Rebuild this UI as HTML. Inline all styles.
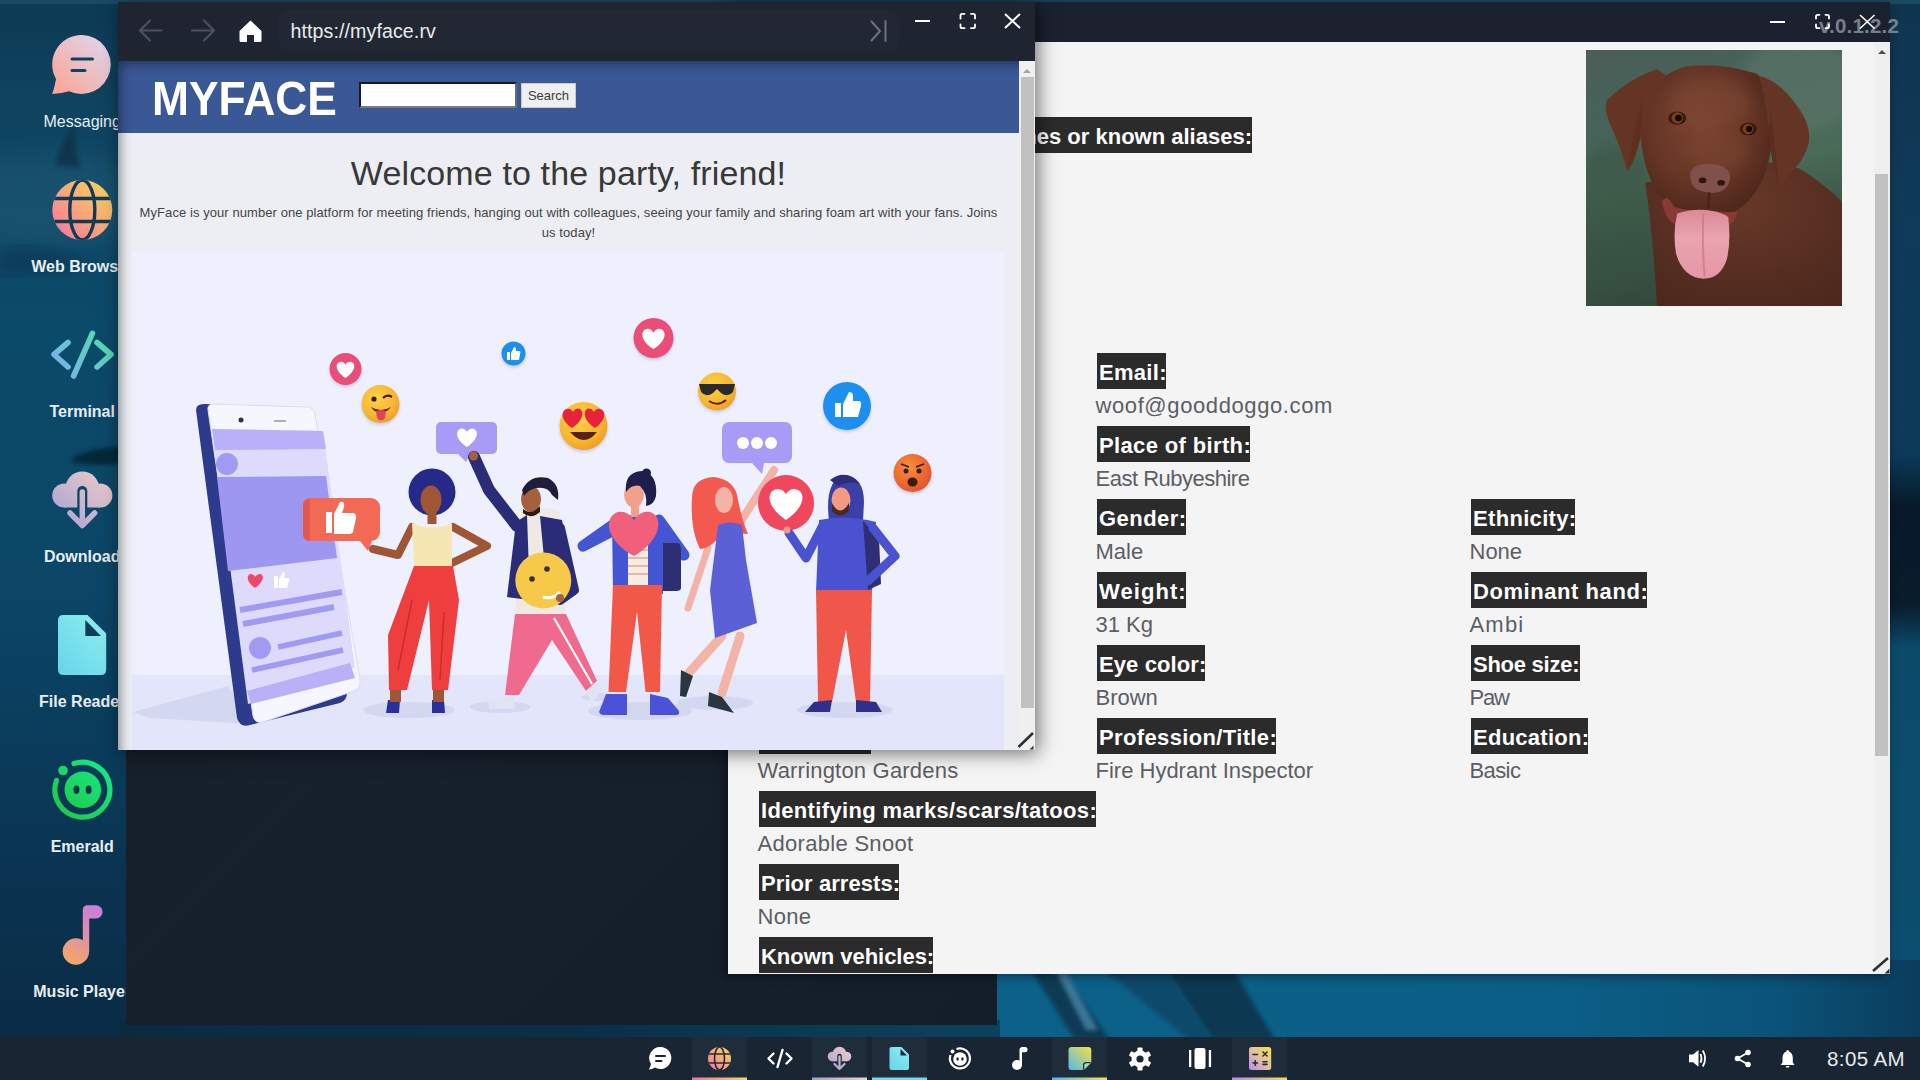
<!DOCTYPE html>
<html><head><meta charset="utf-8">
<style>
*{box-sizing:border-box;margin:0;padding:0}
html,body{width:1920px;height:1080px;overflow:hidden}
body{position:relative;font-family:"Liberation Sans",sans-serif;background:#0b4566}
.abs{position:absolute}
#wall{left:0;top:0;
 background:
  radial-gradient(ellipse 500px 300px at 1300px 1010px, rgba(20,120,170,.55), rgba(20,120,170,0) 70%),
  linear-gradient(180deg,#0d4a69 0%,#0b4262 45%,#0a3350 80%,#0a2c44 100%);}
/* desktop icons */
.dicon{position:absolute;left:0;width:165px;text-align:center}
.dlabel{position:absolute;left:0;width:165px;text-align:center;color:#e9eef1;font-size:16px;font-weight:700;white-space:nowrap}
/* dark back window */
#backwin{left:126px;top:40px;width:871px;height:985px;background:linear-gradient(135deg,#131c27,#17212d 50%,#141e29)}
/* profile window */
#prof{left:728px;top:2px;width:1162px;height:972px;background:#f4f4f4;box-shadow:-3px 2px 10px rgba(0,0,0,.45)}
#proftb{left:0;top:0;width:1162px;height:40px;background:#19222e}
.lbl{position:absolute;height:36px;background:#2b2b2b;color:#fff;font-weight:700;font-size:22px;line-height:36px;padding:2px 0 0 2px;white-space:nowrap;overflow:hidden}
.val{position:absolute;color:#5b5e64;font-size:22px;white-space:nowrap;line-height:33px;margin-left:-1.5px}
/* browser */
#brow{left:118px;top:2px;width:917px;height:748px;background:#eceef3;box-shadow:3px 3px 18px rgba(0,0,0,.55)}
#browtb{left:0;top:0;width:917px;height:59px;background:#1e2530}
#taskbar{left:0;top:1037px;width:1920px;height:43px;background:#1a2533}
.tslot{position:absolute;top:0;width:55px;height:43px}
.tslot.act{background:#1f2d3b}
.tund{position:absolute;left:0;bottom:0;width:55px;height:3px}
</style></head><body>
<svg id="wall" class="abs" width="1920" height="1080" viewBox="0 0 1920 1080">
 <defs>
  <linearGradient id="wl" x1="0" y1="0" x2="0" y2="1"><stop offset="0" stop-color="#0d3954"/><stop offset=".1" stop-color="#0f4460"/><stop offset=".3" stop-color="#0c4a6a"/><stop offset=".55" stop-color="#0b4666"/><stop offset=".8" stop-color="#0a3452"/><stop offset="1" stop-color="#0b2a42"/></linearGradient>
  <linearGradient id="wr" x1="0" y1="0" x2="0" y2="1"><stop offset="0" stop-color="#0e3450"/><stop offset=".2" stop-color="#0f3b58"/><stop offset=".42" stop-color="#0c3a58"/><stop offset=".47" stop-color="#07192a"/><stop offset=".56" stop-color="#081c2c"/><stop offset=".6" stop-color="#0c4a6a"/><stop offset="1" stop-color="#0b4f70"/></linearGradient>
  <linearGradient id="wbot" x1="0" x2="1"><stop offset="0" stop-color="#0c6189"/><stop offset=".6" stop-color="#0b5f87"/><stop offset=".85" stop-color="#0b5278"/><stop offset="1" stop-color="#0a3d5c"/></linearGradient>
  <filter id="wb12" x="-50%" y="-50%" width="200%" height="200%"><feGaussianBlur stdDeviation="14"/></filter>
  <linearGradient id="wstrip" x1="0" x2="1"><stop offset="0" stop-color="#0b2a40"/><stop offset=".5" stop-color="#0a2f47"/><stop offset="1" stop-color="#0b4260"/></linearGradient>
  <filter id="wb6"><feGaussianBlur stdDeviation="6"/></filter>
  <filter id="wb2"><feGaussianBlur stdDeviation="2"/></filter>
 </defs>
 <rect width="1920" height="1080" fill="#0b4566"/>
 <rect x="0" y="0" width="130" height="1080" fill="url(#wl)"/>
 <ellipse cx="50" cy="200" rx="120" ry="45" fill="#2a6580" opacity=".35" filter="url(#wb12)"/>
 <path d="M55 165 Q62 140 75 125 Q74 150 80 168 Z" fill="#0a3048" opacity=".8" filter="url(#wb2)"/>
 <path d="M0 250 Q40 240 90 262 Q60 272 0 275 Z" fill="#0a3552" opacity=".6" filter="url(#wb6)"/>
 <path d="M72 458 Q95 446 125 447 L125 462 Q100 468 72 462 Z" fill="#061a28" opacity=".7" filter="url(#wb2)"/>
 <rect x="1880" y="0" width="40" height="1080" fill="url(#wr)"/>
 <rect x="990" y="960" width="930" height="80" fill="url(#wbot)"/>
 <path d="M1158 960 L1228 960 L1275 1040 L1212 1040 Z" fill="#083048" opacity=".85" filter="url(#wb2)"/>
 <path d="M1092 960 L1160 960 L1214 1040 L1190 1040 Z" fill="#0b4a6a" filter="url(#wb2)"/>
 <path d="M1025 960 L1054 960 L1110 1040 L1075 1040 Z" fill="#0a3a55" filter="url(#wb2)"/>
 <path d="M1056 972 L1066 972 L1098 1030 L1086 1030 Z" fill="#5a9ec0" opacity=".6" filter="url(#wb2)"/>
 <rect x="0" y="0" width="1920" height="4" fill="#1a4a62"/>
 <rect x="120" y="1020" width="880" height="17" fill="url(#wstrip)"/>
</svg>

<svg class="abs" style="left:0;top:0" width="130" height="1037" viewBox="0 0 130 1037">
 <defs>
  <linearGradient id="gMsg" x1="0" y1="1" x2="1" y2="0"><stop offset="0" stop-color="#fca38f"/><stop offset="1" stop-color="#ddd9f5"/></linearGradient>
  <linearGradient id="gWeb" x1="0" y1="1" x2="1" y2="0"><stop offset="0" stop-color="#f76fa5"/><stop offset=".5" stop-color="#f9a77b"/><stop offset="1" stop-color="#f7d957"/></linearGradient>
  <linearGradient id="gTerm" gradientUnits="userSpaceOnUse" x1="52" y1="380" x2="112" y2="330"><stop offset="0" stop-color="#80a8f4"/><stop offset="1" stop-color="#4ee3a5"/></linearGradient>
  <linearGradient id="gDl" gradientUnits="userSpaceOnUse" x1="52" y1="528" x2="112" y2="470"><stop offset="0" stop-color="#a59ed6"/><stop offset="1" stop-color="#f0cfc6"/></linearGradient>
  <linearGradient id="gFile" x1="0" y1="1" x2="1" y2="0"><stop offset="0" stop-color="#66d4ea"/><stop offset="1" stop-color="#8ff0ee"/></linearGradient>
  <linearGradient id="gEm" gradientUnits="userSpaceOnUse" x1="52" y1="820" x2="112" y2="760"><stop offset="0" stop-color="#22c33e"/><stop offset="1" stop-color="#13ec8a"/></linearGradient>
  <linearGradient id="gMus" gradientUnits="userSpaceOnUse" x1="62" y1="965" x2="103" y2="905"><stop offset="0" stop-color="#f8ab5c"/><stop offset="1" stop-color="#c77ae6"/></linearGradient>
 </defs>
 <!-- messaging -->
 <path fill="url(#gMsg)" d="M82.5 35 A29.5 29.5 0 1 1 69 91.3 Q60 94 52.2 94 Q55 86 56 79 A29.5 29.5 0 0 1 82.5 35 Z"/>
 <g stroke="#0f4260" stroke-width="3" stroke-linecap="round"><path d="M72 59 H92.5 M72 70.5 H85"/></g>
 <!-- web -->
 <circle cx="82.3" cy="210" r="30" fill="url(#gWeb)"/>
 <clipPath id="cWeb"><circle cx="82.3" cy="210" r="30"/></clipPath>
 <g fill="none" stroke="#123a55" stroke-width="3.4" clip-path="url(#cWeb)">
  <ellipse cx="82.3" cy="210" rx="12.5" ry="30"/>
  <path d="M50 198.5 H115 M50 221.5 H115"/>
 </g>
 <!-- terminal -->
 <g fill="none" stroke="url(#gTerm)" stroke-width="5.6" stroke-linecap="round" stroke-linejoin="round">
  <path d="M68 342.5 L54 354.5 L68 367"/>
  <path d="M92.4 333.3 L73.6 376"/>
  <path d="M97 342.5 L111 354.5 L97 367"/>
 </g>
 <!-- download -->
 <g fill="url(#gDl)">
  <circle cx="82.3" cy="488.5" r="17"/><circle cx="64.2" cy="495.5" r="12"/><circle cx="100.4" cy="495.5" r="12"/><rect x="64.2" y="488.5" width="36.2" height="19"/>
 </g>
 <path d="M82.3 491 V527" stroke="#0f4362" stroke-width="10" stroke-linecap="round"/>
 <g fill="none" stroke="url(#gDl)" stroke-width="5.5" stroke-linecap="round" stroke-linejoin="round">
  <path d="M82.3 492 V524.5 M70 513 L82.3 525.5 L94.6 513"/>
 </g>
 <!-- file -->
 <path fill="url(#gFile)" d="M63 615 H87.5 L106.2 633.5 V669.5 Q106.2 675 100.7 675 H63.5 Q58 675 58 669.5 V620.5 Q58 615 63 615 Z"/>
 <path fill="#0f3d5a" d="M85.3 620 V636 H101 Z"/>
 <!-- emerald -->
 <path fill="none" stroke="url(#gEm)" stroke-width="5.2" stroke-linecap="round" d="M74 763.5 A27.5 27.5 0 1 1 56.5 780.5"/>
 <circle cx="63" cy="770.5" r="4.8" fill="url(#gEm)"/>
 <circle cx="82.8" cy="789.8" r="18.3" fill="url(#gEm)"/>
 <ellipse cx="76.4" cy="789.8" rx="3" ry="4.2" fill="#0f3550"/>
 <ellipse cx="88.6" cy="789.8" rx="3" ry="4.2" fill="#0f3550"/>
 <!-- music -->
 <g fill="url(#gMus)">
  <circle cx="75.9" cy="951.5" r="13.2"/>
  <path d="M82.8 951.5 V910 Q82.8 905.2 87.6 905.2 H96 A6.6 6.6 0 0 1 96 918.4 H89.2 V951.5 Z"/>
 </g>
</svg>
<div class="dlabel" style="left:-0.3px;top:121.5px;font-weight:400;width:165px;line-height:0">Messaging</div>
<div class="dlabel" style="left:-0.3px;top:266.5px;line-height:0">Web Browser</div>
<div class="dlabel" style="left:-0.3px;top:411.5px;line-height:0">Terminal</div>
<div class="dlabel" style="left:-0.3px;top:556.5px;line-height:0">Download</div>
<div class="dlabel" style="left:-0.3px;top:701.5px;line-height:0">File Reader</div>
<div class="dlabel" style="left:-0.3px;top:846.5px;line-height:0">Emerald</div>
<div class="dlabel" style="left:-0.3px;top:991.5px;line-height:0">Music Player</div>
<div id="backwin" class="abs"></div>

<!-- PROFILE WINDOW -->
<div id="prof" class="abs">
 <div id="proftb" class="abs">
  <div class="abs" style="left:1091px;top:14px;font-size:20.5px;font-weight:700;color:#76808a;white-space:nowrap;line-height:20px;letter-spacing:0.2px">v.0.1.2.2</div>
  <svg class="abs" style="left:0;top:0" width="1162" height="40" viewBox="728 2 1162 40">
   <g fill="none" stroke="#fff" stroke-width="2">
    <path d="M1770 22 H1785"/>
    <path stroke-width="1.8" stroke-linecap="round" d="M1816 18.5 V16.5 Q1816 14.8 1817.7 14.8 H1819.5 M1825.5 14.8 H1827.3 Q1829 14.8 1829 16.5 V18.5 M1829 24.5 V26.5 Q1829 28.2 1827.3 28.2 H1825.5 M1819.5 28.2 H1817.7 Q1816 28.2 1816 26.5 V24.5"/>
   </g>
   <path d="M1860 15 L1874.5 28.5 M1874.5 15 L1860 28.5" stroke="#fff" stroke-width="1.6"/>
  </svg>
 </div>
 <div class="abs" style="left:1146px;top:40px;width:16px;height:932px;background:#efefef">
  <div class="abs" style="left:1px;top:132px;width:13px;height:582px;background:#c1c1c1"></div>
  <svg class="abs" style="left:0;top:5px" width="16" height="8"><path d="M4 7 L8 3 L12 7Z" fill="#505050"/></svg>
 </div>
 <svg class="abs" style="left:1142px;top:952px" width="20" height="20"><path d="M3 17 L18 4" stroke="#2a3038" stroke-width="2.6"/><path d="M14.5 19.5 L19.5 14.5 V19.5 Z" fill="#2a3038"/></svg>
 <div id="dog" class="abs" style="left:858px;top:48px;width:256px;height:256px;overflow:hidden;background:#55705f">
  <svg width="256" height="256" viewBox="0 0 1080 1080">
   <defs>
    <linearGradient id="dbg" x1="0" y1="0" x2="0.2" y2="1"><stop offset="0" stop-color="#4a5f58"/><stop offset=".3" stop-color="#45635a"/><stop offset=".55" stop-color="#4a6b56"/><stop offset=".8" stop-color="#3b5646"/><stop offset="1" stop-color="#34493c"/></linearGradient>
    <radialGradient id="dhead" cx=".45" cy=".4" r=".6"><stop offset="0" stop-color="#7a4430"/><stop offset=".6" stop-color="#673626"/><stop offset="1" stop-color="#4f281c"/></radialGradient>
    <radialGradient id="dbody" cx=".5" cy=".3" r=".8"><stop offset="0" stop-color="#673828"/><stop offset="1" stop-color="#4c281d"/></radialGradient>
    <linearGradient id="dtong" x1="0" y1="0" x2="0" y2="1"><stop offset="0" stop-color="#d98a96"/><stop offset=".4" stop-color="#eaa3b0"/><stop offset="1" stop-color="#e597a6"/></linearGradient>
   </defs>
   <filter id="fb30"><feGaussianBlur stdDeviation="30"/></filter>
   <filter id="fb4"><feGaussianBlur stdDeviation="4"/></filter>
   <rect width="1080" height="1080" fill="url(#dbg)"/>
   <ellipse cx="900" cy="150" rx="260" ry="200" fill="#637a6c" opacity=".5" filter="url(#fb30)"/>
   <ellipse cx="120" cy="700" rx="200" ry="300" fill="#34503f" opacity=".5" filter="url(#fb30)"/>
   <!-- body -->
   <path fill="url(#dbody)" d="M250 560 Q280 760 300 1080 H1080 V640 Q1000 560 900 500 L760 470 Z"/>
   <!-- head -->
   <path fill="url(#dhead)" d="M230 330 Q240 120 420 70 Q560 50 720 100 Q800 160 790 330 Q780 520 700 620 Q620 720 500 700 Q360 690 300 600 Q230 480 230 330 Z"/>
   <!-- ears -->
   <path fill="#643524" d="M300 80 Q180 120 90 210 Q70 250 110 330 Q150 420 175 510 Q210 470 240 330 Q270 200 340 110 Z"/>
   <path fill="#5c2e1b" d="M240 200 Q200 330 175 505 Q215 440 235 330 Z" opacity=".7"/>
   <path fill="#643524" d="M730 110 Q820 130 900 250 Q950 320 940 390 Q920 470 860 520 Q830 560 815 600 Q790 520 780 420 Q770 260 730 110 Z"/>
   <path fill="#55291a" d="M780 260 Q800 420 815 600 Q790 480 770 380 Z" opacity=".6"/>
   <!-- forehead highlight -->
   <ellipse cx="520" cy="230" rx="170" ry="110" fill="#7e4834" opacity=".55" filter="url(#fb30)"/>
   <ellipse cx="560" cy="430" rx="120" ry="90" fill="#7a4532" opacity=".5" filter="url(#fb30)"/>
   <!-- eyes -->
   <ellipse cx="385" cy="287" rx="38" ry="28" fill="#3a1a10"/>
   <circle cx="385" cy="287" r="24" fill="#7a4018"/>
   <circle cx="390" cy="287" r="14" fill="#120804"/>
   <ellipse cx="685" cy="333" rx="36" ry="27" fill="#3a1a10"/>
   <circle cx="683" cy="333" r="22" fill="#7a4018"/>
   <circle cx="688" cy="333" r="13" fill="#120804"/>
   <!-- nose -->
   <path fill="#80504a" d="M440 520 Q450 480 525 480 Q600 485 608 530 Q610 580 560 600 Q520 610 470 590 Q435 565 440 520 Z"/>
   <ellipse cx="492" cy="550" rx="16" ry="12" fill="#2f150f"/>
   <ellipse cx="570" cy="560" rx="16" ry="12" fill="#2f150f"/>
   <path d="M520 600 L515 670" stroke="#4a2417" stroke-width="10"/>
   <!-- mouth -->
   <path fill="#8a3a35" d="M320 640 Q340 600 370 660 Q420 680 510 675 Q600 690 640 680 Q630 730 590 750 L380 740 Q330 710 320 640 Z"/>
   <!-- tongue -->
   <path fill="url(#dtong)" d="M385 690 Q440 670 505 675 Q580 685 600 705 Q612 800 595 880 Q570 965 495 965 Q410 960 380 860 Q365 770 385 690 Z"/>
   <path d="M495 690 Q490 820 500 955" stroke="#c77585" stroke-width="8" fill="none" opacity=".7"/>
  </svg>
 </div>
<div class="lbl" style="left:31px;top:115px;width:493px;text-align:right">Other names or known aliases:</div>
<div class="lbl" style="left:369px;top:351px;width:69px;letter-spacing:0.29px">Email:</div>
<div class="lbl" style="left:369px;top:424px;width:153px;letter-spacing:0.36px">Place of birth:</div>
<div class="lbl" style="left:369px;top:497px;width:89px;letter-spacing:0.46px">Gender:</div>
<div class="lbl" style="left:743px;top:497px;width:104px;letter-spacing:0.32px">Ethnicity:</div>
<div class="lbl" style="left:369px;top:570px;width:89px;letter-spacing:1.06px">Weight:</div>
<div class="lbl" style="left:743px;top:570px;width:176px;letter-spacing:0.56px">Dominant hand:</div>
<div class="lbl" style="left:369px;top:643px;width:108px;letter-spacing:0.10px">Eye color:</div>
<div class="lbl" style="left:743px;top:643px;width:109px;letter-spacing:-0.26px">Shoe size:</div>
<div class="lbl" style="left:31px;top:716px;width:112px">Address:</div>
<div class="lbl" style="left:369px;top:716px;width:179px;letter-spacing:0.36px">Profession/Title:</div>
<div class="lbl" style="left:743px;top:716px;width:117px;letter-spacing:0.27px">Education:</div>
<div class="lbl" style="left:31px;top:789px;width:337px;letter-spacing:0.35px">Identifying marks/scars/tatoos:</div>
<div class="lbl" style="left:31px;top:862px;width:140px;letter-spacing:0.07px">Prior arrests:</div>
<div class="lbl" style="left:31px;top:935px;width:174px;letter-spacing:-0.03px">Known vehicles:</div>
<div class="val" style="left:369px;top:387px;letter-spacing:0.6px">woof@gooddoggo.com</div>
<div class="val" style="left:369px;top:460px;letter-spacing:-0.5px">East Rubyeshire</div>
<div class="val" style="left:369px;top:533px">Male</div>
<div class="val" style="left:743px;top:533px">None</div>
<div class="val" style="left:369px;top:606px">31 Kg</div>
<div class="val" style="left:743px;top:606px;letter-spacing:1.2px">Ambi</div>
<div class="val" style="left:369px;top:679px">Brown</div>
<div class="val" style="left:743px;top:679px;letter-spacing:-1.2px">Paw</div>
<div class="val" style="left:31px;top:752px;letter-spacing:0.2px">Warrington Gardens</div>
<div class="val" style="left:369px;top:752px">Fire Hydrant Inspector</div>
<div class="val" style="left:743px;top:752px;letter-spacing:-0.6px">Basic</div>
<div class="val" style="left:31px;top:825px;letter-spacing:0.3px">Adorable Snoot</div>
<div class="val" style="left:31px;top:898px;letter-spacing:0.3px">None</div>
</div>

<!-- BROWSER WINDOW -->
<div id="brow" class="abs">
 <div id="browtb" class="abs">
  <div class="abs" style="left:160px;top:8px;width:622px;height:41px;border-radius:12px;background:#212833"></div>
  <svg class="abs" style="left:0;top:0" width="917" height="59" viewBox="0 0 917 59">
   <g fill="none" stroke="#4b525c" stroke-width="2.2" stroke-linecap="round" stroke-linejoin="round">
    <path d="M22.5 28.5 H43.5 M32 18.5 L22 28.5 L32 38.5"/>
    <path d="M74 28.5 H95.5 M86 18.5 L96 28.5 L86 38.5"/>
   </g>
   <path fill="#fff" d="M132.5 18.5 L121.5 29 V38.5 Q121.5 40 123 40 H129 V33 H136 V40 H142 Q143.5 40 143.5 38.5 V29 Z"/>
   <g fill="none" stroke="#6d727a" stroke-width="2" stroke-linecap="round" stroke-linejoin="round">
    <path d="M753.5 19.5 L762 29 L753.5 38.5 M767.5 19 V39"/>
   </g>
   <g fill="none" stroke="#fff" stroke-width="2" stroke-linecap="butt">
    <path d="M797 19 H812"/>
    <path stroke-width="1.8" stroke-linecap="round" d="M842.5 16.5 V13.5 Q842.5 11.8 844.2 11.8 H846.5 M853 11.8 H855.3 Q857 11.8 857 13.5 V16.5 M857 22.5 V24.5 Q857 26.2 855.3 26.2 H853 M846.5 26.2 H844.2 Q842.5 26.2 842.5 24.5 V22.5"/>
    <path d="M887 12 L902 26 M902 12 L887 26"/>
   </g>
  </svg>
  <div class="abs" style="left:172.5px;top:17.8px;font-size:19.6px;color:#e9ebed;letter-spacing:0.1px;white-space:nowrap">https://myface.rv</div>
 </div>
 <div id="page" class="abs" style="left:0;top:59px;width:901px;height:689px;overflow:hidden;background:#eceef3">
  <div class="abs" style="left:0;top:0;width:901px;height:72px;background:#3a5796"></div>
  <div class="abs" style="left:33.5px;top:36.6px;font-size:49px;font-weight:700;color:#fff;line-height:0;letter-spacing:0;white-space:nowrap;transform:scaleX(0.905);transform-origin:0 0">MYFACE</div>
  <div class="abs" style="left:241px;top:21px;width:158px;height:26px;background:#fff;border:2px solid #1a1a1a;border-right-color:#6a6a6a;border-bottom-color:#7a7a7a"></div>
  <div class="abs" style="left:403px;top:21.5px;width:55px;height:25px;background:#efefef;border:1px solid #c9c9c9;font-size:13px;color:#3a3a3a;text-align:center;line-height:23px">Search</div>
  <div class="abs" style="left:0;top:112px;width:901px;text-align:center;font-size:34px;color:#383838;white-space:nowrap;line-height:0;letter-spacing:0.13px">Welcome to the party, friend!</div>
  <div class="abs" style="left:0;top:142px;width:901px;text-align:center;font-size:13px;color:#444;line-height:20px;padding:0 10px;letter-spacing:0.075px">MyFace is your number one platform for meeting friends, hanging out with colleagues, seeing your family and sharing foam art with your fans. Joins<br>us today!</div>
  <div id="illus" class="abs" style="left:14px;top:190px;width:872px;height:510px;background:#eef0fd">
  <svg width="872" height="510" viewBox="132 251 872 510">
   <defs>
    <filter id="ishadow" x="-20%" y="-20%" width="140%" height="150%"><feDropShadow dx="0" dy="2" stdDeviation="1.5" flood-color="#8088b0" flood-opacity=".35"/></filter>
    <radialGradient id="emo" cx=".4" cy=".35" r=".7"><stop offset="0" stop-color="#ffd24a"/><stop offset=".7" stop-color="#f6b52f"/><stop offset="1" stop-color="#ef9a25"/></radialGradient>
    <radialGradient id="emoA" cx=".4" cy=".35" r=".7"><stop offset="0" stop-color="#f8903a"/><stop offset="1" stop-color="#e5502a"/></radialGradient>
   </defs>
   <rect x="132" y="675" width="872" height="90" fill="#e3e6fa"/>
   <!-- ground shadows -->
   <path d="M133 712 L228 686 L252 724 L150 718 Z" fill="#d3d7ef"/>
   <ellipse cx="409" cy="710" rx="46" ry="8" fill="#d3d7ef"/>
   <ellipse cx="500" cy="707" rx="30" ry="6" fill="#d3d7ef"/>
   <ellipse cx="596" cy="697" rx="14" ry="4" fill="#d3d7ef"/>
   <ellipse cx="640" cy="711" rx="52" ry="9" fill="#d3d7ef"/>
   <ellipse cx="715" cy="703" rx="38" ry="7" fill="#d3d7ef"/>
   <ellipse cx="845" cy="710" rx="48" ry="8" fill="#d3d7ef"/>
   <!-- phone -->
   <path d="M196 410 Q196 404 204 404 L300 407 Q308 408 309 414 L347 690 Q348 700 340 703 L250 725 Q240 728 237 718 Z" fill="#2d3b8c"/>
   <path d="M208 410 Q207 404 214 404 L308 407 Q314 408 315 414 L360 680 Q361 688 354 691 L263 722 Q255 724 253 716 Z" fill="#f5f6ff" stroke="#d9dcf5" stroke-width="1"/>
   <path d="M212 429 L323 431 L355 668 L248 704 Z" fill="#dedafc"/>
   <path d="M212 429 L323 431 L326 449 L215 450 Z" fill="#b8b0f8"/>
   <circle cx="227" cy="464" r="11" fill="#a09af2"/>
   <path d="M217 477 L326 476 L337 558 L228 571 Z" fill="#9d97f2"/>
   <path d="M255 590 C245 583 247 576 251 576 C254 576 255 579 255 579 C255 579 257 576 260 576 C264 576 265 583 255 590 Z" fill="#ef4866" transform="translate(0 -2) scale(1)"/>
   <path d="M274 576 H278 V588 H274 Z M279 579 L283 572 Q285 572 285 575 L284 578 H289 Q290 579 289 581 L287 588 H279 Z" fill="#fff"/>
   <path d="M240 610 L342 592" stroke="#a09af2" stroke-width="6"/>
   <path d="M243 624 L334 607" stroke="#a09af2" stroke-width="6"/>
   <circle cx="260" cy="648" r="11" fill="#a09af2"/>
   <path d="M278 647 L342 633" stroke="#a09af2" stroke-width="5.5"/>
   <path d="M252 670 L343 650" stroke="#a09af2" stroke-width="5.5"/>
   <path d="M247 691 L350 663 L355 678 L251 704 Z" fill="#b8b0f8"/>
   <circle cx="241" cy="420" r="2.5" fill="#333"/>
   <path d="M274 421 H286" stroke="#999" stroke-width="1.5"/>

   <!-- woman 1 -->
   <rect x="303" y="498" width="77" height="43" rx="9" fill="#f26a55"/>
   <path d="M303 505 Q303 498 312 498 H310 V541 Q303 541 303 534 Z" fill="#e5584a"/>
   <path d="M360 541 L368 551 L372 541 Z" fill="#f26a55"/>
   <path d="M326 512 H332 V533 H326 Z M334 514 L340 502 Q345 501 344 507 L342 513 H353 Q357 514 356 518 L353 532 Q352 534 348 534 H334 Z" fill="#fff"/>
   <path d="M412 527 L398 555 L373 549" stroke="#9e5635" stroke-width="8" fill="none" stroke-linecap="round" stroke-linejoin="round"/>
   <path d="M453 527 L487 546 L452 563" stroke="#9e5635" stroke-width="8" fill="none" stroke-linecap="round" stroke-linejoin="round"/>
   <circle cx="432" cy="492" r="23.5" fill="#252a8a"/>
   <ellipse cx="431" cy="500" rx="10.5" ry="14.5" fill="#9e5635"/>
   <rect x="427.5" y="510" width="9" height="14" fill="#9e5635"/>
   <path d="M412 523 Q432 532 452 523 L452 566 H414 Z" fill="#f6e6b2"/>
   <path d="M414 566 H453 L459 600 L448 690 H432 L429 600 L407 690 H389 L388 635 Z" fill="#ee3e3e"/>
   <path d="M412 600 L398 670 M444 612 L440 680" stroke="#c92d33" stroke-width="1.5"/>
   <path d="M388 700 L386 713 H399 L400 700 Z M432 700 L432 713 H445 L444 700 Z" fill="#2b2f9a"/>
   <path d="M390 690 H401 V702 H390 Z M433 690 H444 V702 H433 Z" fill="#9e5635"/>

   <!-- man 1 -->
   <rect x="436" y="422" width="61" height="32" rx="5" fill="#a79bf5"/>
   <path d="M458 454 L466 462 L470 454 Z" fill="#a79bf5"/>
   <path d="M467 447 C456 440 455 431 460 429 C464 427 467 432 467 432 C467 432 470 427 474 429 C479 431 478 440 467 447 Z" fill="#fff"/>
   <path d="M474 457 L489 490 L517 526" stroke="#2a2c78" stroke-width="12" fill="none" stroke-linecap="round" stroke-linejoin="round"/>
   <circle cx="473.5" cy="456" r="4.5" fill="#a5603c"/>
   <path d="M521 511 Q540 504 560 511 L566 615 H515 Z" fill="#efe9e3"/>
   <path d="M516 522 L527 515 L530 600 L507 597 Z" fill="#2a2c78"/>
   <path d="M540 516 L562 520 L575 590 L560 600 L548 600 Z" fill="#2a2c78"/>
   <path d="M560 528 L574 590 L560 600" stroke="#2a2c78" stroke-width="10" fill="none" stroke-linecap="round" stroke-linejoin="round"/>
   <ellipse cx="531" cy="499" rx="10" ry="13" fill="#a5603c"/>
   <path d="M523 509 Q531 516 540 506 L540 512 Q531 520 523 513 Z" fill="#2a1a1a"/>
   <path d="M522 490 Q530 474 548 478 Q560 484 558 500 L552 495 Q548 486 536 488 Q528 490 524 496 Z" fill="#1e1e3c"/>
   <circle cx="543.3" cy="580.4" r="28" fill="#f7c948"/>
   <circle cx="532" cy="579" r="2.8" fill="#333"/><circle cx="547" cy="569" r="2.8" fill="#333"/>
   <path d="M543 597 Q553 600 560 592" stroke="#fff" stroke-width="3" fill="none"/>
   <circle cx="560" cy="598" r="4" fill="#a5603c"/>
   <path d="M515 614 H566 L597 681 L586 691 L552 640 L519 695 H505 Z" fill="#ef6a8c"/>
   <path d="M554 618 L592 684" stroke="#fff" stroke-width="2.2"/>
   <path d="M488 702 L489 709 H515 L515 698 L506 698 Z M586 691 L597 681 L603 688 L592 705 Z" fill="#dfe3f2"/>

   <!-- man 2 -->
   <path d="M617 522 L583 546 L610 532" stroke="#4355d2" stroke-width="11" fill="none" stroke-linecap="round" stroke-linejoin="round"/>
   <path d="M659 520 L684 555 L657 535" stroke="#4355d2" stroke-width="11" fill="none" stroke-linecap="round" stroke-linejoin="round"/>
   <path d="M659 543 H678 Q681 545 681 550 V588 Q681 591 676 591 H660 Z" fill="#2e2e72"/>
   <path d="M612 518 Q637 512 663 518 L663 594 H613 Z" fill="#4355d2"/>
   <path d="M628 520 H648 L648 586 H628 Z" fill="#f3ede4"/>
   <path d="M628 550 H648 M628 558 H648 M628 566 H648 M628 574 H648" stroke="#e6a49a" stroke-width="1.6"/>
   <rect x="631" y="505" width="8" height="12" fill="#f2a08c"/>
   <ellipse cx="634" cy="494.5" rx="10" ry="13" fill="#f2a08c"/>
   <path d="M626 492 Q624 472 642 471 Q658 474 656 496 Q654 505 646 506 Q648 494 640 486 Q632 484 626 492 Z" fill="#1f1d4d"/>
   <circle cx="646.5" cy="473" r="4.5" fill="#1f1d4d"/>
   <path d="M634 556 C604 540 604 516 618 512 C628 510 634 520 634 520 C634 520 640 510 650 512 C664 516 662 540 634 556 Z" fill="#f0607a"/>
   <path d="M613 585 H662 L660 692 H645.5 L637 612 L626 692 H608.5 Z" fill="#f25847"/>
   <path d="M606 694 L599 712 Q600 715 604 715 H627 L627 694 Z M650 694 L650 715 H676 Q680 715 679 711 L668 698 Z" fill="#4c52d8"/>

   <!-- woman 2 -->
   <rect x="722" y="422" width="70" height="41" rx="7" fill="#a79bf5"/>
   <path d="M752 463 L762 474 L764 463 Z" fill="#a79bf5"/>
   <circle cx="743" cy="443" r="6" fill="#fff"/><circle cx="757" cy="443" r="6" fill="#fff"/><circle cx="771" cy="443" r="6" fill="#fff"/>
   <path d="M737 527 L774 470" stroke="#f3b3a6" stroke-width="8" fill="none" stroke-linecap="round"/>
   <path d="M708 548 L688 608" stroke="#f3b3a6" stroke-width="7" fill="none" stroke-linecap="round"/>
   <path d="M722 636 L686 676 M740 636 L722 693" stroke="#f3b3a6" stroke-width="9" fill="none" stroke-linecap="round"/>
   <path d="M692 498 Q692 478 714 477 Q736 480 738 500 Q742 520 748 534 Q738 534 733 528 L720 535 Q712 548 700 549 Q690 530 692 498 Z" fill="#f25a4f"/>
   <ellipse cx="724" cy="500" rx="9" ry="13" fill="#f3b3a6"/>
   <path d="M718 525 Q730 520 742 525 L746 560 L757 623 L715 638 L710 590 Z" fill="#5b60d6"/>
   <path d="M681 670 L680 696 L686 697 L693 676 Z M709 692 L708 706 L734 713 L722 697 Z" fill="#2a3540"/>
   <circle cx="786" cy="503" r="28" fill="#f0475c"/>
   <path d="M786 520 C768 508 766 494 774 490 C781 486 786 494 786 494 C786 494 791 486 798 490 C806 494 804 508 786 520 Z" fill="#fff"/>

   <!-- man 3 -->
   <path d="M829 521 Q824 478 846 475 Q864 478 864 502 L863 521 Z" fill="#3a40a8"/>
   <ellipse cx="841" cy="500" rx="9.5" ry="12.5" fill="#f29a84"/>
   <path d="M832 503 Q840 518 849 503 L849 511 Q840 520 832 511 Z" fill="#4a2b23"/>
   <path d="M830 480 Q846 468 860 484 Q850 480 838 486 Z" fill="#2b2f7a"/>
   <path d="M819 520 Q846 514 876 522 L872 592 H816 Z" fill="#4a52d0"/>
   <path d="M863 521 L879 538 L881 584 L868 590 Z" fill="#2e2e72"/>
   <path d="M822 527 L806 558 L789 533" stroke="#4a52d0" stroke-width="9" fill="none" stroke-linecap="round" stroke-linejoin="round"/>
   <path d="M873 528 L895 556 L868 581" stroke="#4a52d0" stroke-width="9" fill="none" stroke-linecap="round" stroke-linejoin="round"/>
   <circle cx="787" cy="530" r="3.5" fill="#f29a84"/>
   <path d="M816 590 H872 L870 702 H856 L846 630 L832 702 H818 Z" fill="#f0564a"/>
   <path d="M814 702 L805 712 H830 L832 700 Z M856 700 L856 712 H882 L876 702 Z" fill="#2f2f8c"/>

   <!-- emojis -->
   <g filter="url(#ishadow)">
    <circle cx="345.5" cy="369" r="16" fill="#ea4d78"/>
    <path d="M345.5 378 C335 371 335 363 340 362 C344 361 345.5 365 345.5 365 C345.5 365 347 361 351 362 C356 363 356 371 345.5 378 Z" fill="#fff"/>
    <circle cx="653.5" cy="338" r="20" fill="#ea4d78"/>
    <path d="M653.5 349 C640 341 640 330 647 329 C651 328 653.5 333 653.5 333 C653.5 333 656 328 660 329 C667 330 667 341 653.5 349 Z" fill="#fff"/>
    <circle cx="513.5" cy="353.5" r="12" fill="#1c8ff0"/>
    <circle cx="513.5" cy="353.5" r="10" fill="#fff" opacity="0"/>
    <path d="M507 352 H510 V360 H507 Z M511 353 L514 347 Q516 347 516 349 V351 H520 Q521 352 520 354 L519 360 H511 Z" fill="#fff"/>
    <circle cx="847" cy="406" r="24" fill="#1c8ff0"/>
    <path d="M835 403 H841 V417 H835 Z M843 404 L849 392 Q853 392 853 396 V401 H860 Q862 403 861 406 L858 417 H843 Z" fill="#fff"/>
    <circle cx="380.5" cy="404" r="19" fill="url(#emo)"/>
    <circle cx="374" cy="399" r="2.6" fill="#3b1f0c"/>
    <path d="M383 398 Q387 394 392 397" stroke="#3b1f0c" stroke-width="2.2" fill="none"/>
    <path d="M371 407 Q381 413 391 407 Q386 413 381 413 Q375 413 371 407 Z" fill="#5a2412"/>
    <path d="M376 411 Q381 409 386 411 L385 418 Q381 423 377 418 Z" fill="#e0435a"/>
    <circle cx="583.5" cy="426" r="24" fill="url(#emo)"/>
    <path d="M572 428 C560 420 561 410 567 409 C571 408 573 412 573 412 C573 412 576 407 580 409 C585 412 582 422 572 428 Z" fill="#e8243c"/>
    <path d="M595 428 C585 422 582 412 587 409 C591 407 594 412 594 412 C594 412 596 408 600 409 C606 410 607 420 595 428 Z" fill="#e8243c"/>
    <path d="M570 432 Q584 448 597 432 Z" fill="#5a2412"/>
    <circle cx="717" cy="391.5" r="19" fill="url(#emo)"/>
    <path d="M699 384 H735 L733 392 Q728 398 721 393 L717 389 L713 393 Q706 398 701 392 Z" fill="#2a2a2a"/>
    <path d="M709 401 Q718 407 726 400" stroke="#5a2412" stroke-width="2" fill="none"/>
    <circle cx="912.5" cy="473" r="19" fill="url(#emoA)"/>
    <circle cx="906" cy="471" r="2.5" fill="#3a1a10"/><circle cx="919" cy="471" r="2.5" fill="#3a1a10"/>
    <path d="M901 464 L909 467 M924 464 L916 467" stroke="#3a1a10" stroke-width="1.8"/>
    <ellipse cx="912.5" cy="482" rx="5" ry="4.5" fill="#3a1a10"/>
   </g>
  </svg>
  </div>
  <div class="abs" style="left:0;top:0;width:901px;height:689px;box-shadow:inset 10px 10px 12px -8px rgba(0,0,0,.45)"></div>
 </div>
 <div class="abs" style="left:901px;top:59px;width:16px;height:689px;background:#f0f0f0">
  <div class="abs" style="left:2px;top:16px;width:13px;height:631px;background:#c1c1c1"></div>
  <svg class="abs" style="left:0;top:5px" width="16" height="8"><path d="M4 7 L8 3 L12 7Z" fill="#a3a3a3"/></svg>
 </div>
 <svg class="abs" style="left:896px;top:728px" width="20" height="20"><path d="M4.5 17 L19 3" stroke="#2a3038" stroke-width="2.6"/><path d="M15.5 19.5 L19.5 15.5 V19.5 Z" fill="#2a3038"/></svg>
</div>

<div id="taskbar" class="abs">
 <svg class="abs" style="left:0;top:0" width="1920" height="43" viewBox="0 1037 1920 43">
  <defs>
   <linearGradient id="tWeb" gradientUnits="userSpaceOnUse" x1="708" y1="1070" x2="731" y2="1047"><stop offset="0" stop-color="#f76fa5"/><stop offset=".5" stop-color="#f9a77b"/><stop offset="1" stop-color="#f7d957"/></linearGradient>
   <linearGradient id="tDl" gradientUnits="userSpaceOnUse" x1="828" y1="1070" x2="851" y2="1047"><stop offset="0" stop-color="#a59ed6"/><stop offset="1" stop-color="#f0cfc6"/></linearGradient>
   <linearGradient id="tFile" gradientUnits="userSpaceOnUse" x1="890" y1="1070" x2="910" y2="1047"><stop offset="0" stop-color="#66d4ea"/><stop offset="1" stop-color="#8ff0ee"/></linearGradient>
   <linearGradient id="tNote" gradientUnits="userSpaceOnUse" x1="1068" y1="1070" x2="1091" y2="1047"><stop offset="0" stop-color="#4fb8f0"/><stop offset="1" stop-color="#f8e040"/></linearGradient>
   <linearGradient id="tCalc" gradientUnits="userSpaceOnUse" x1="1249" y1="1070" x2="1271" y2="1047"><stop offset="0" stop-color="#b68af0"/><stop offset=".5" stop-color="#e2c0a0"/><stop offset="1" stop-color="#f8e040"/></linearGradient>
   <linearGradient id="uWeb" x1="0" x2="1"><stop offset="0" stop-color="#f76fa5"/><stop offset="1" stop-color="#f7d957"/></linearGradient>
   <linearGradient id="uDl" x1="0" x2="1"><stop offset="0" stop-color="#a59ed6"/><stop offset="1" stop-color="#f0cfc6"/></linearGradient>
   <linearGradient id="uNote" x1="0" x2="1"><stop offset="0" stop-color="#4fb8f0"/><stop offset="1" stop-color="#f8e040"/></linearGradient>
   <linearGradient id="uCalc" x1="0" x2="1"><stop offset="0" stop-color="#b68af0"/><stop offset="1" stop-color="#f8e040"/></linearGradient>
   <clipPath id="tcWeb"><circle cx="719.5" cy="1058.5" r="11.5"/></clipPath>
  </defs>
  <!-- active slot bgs -->
  <rect x="692" y="1037" width="55" height="43" fill="#1f2c3a"/>
  <rect x="812" y="1037" width="55" height="43" fill="#1f2c3a"/>
  <rect x="872" y="1037" width="55" height="43" fill="#1f2c3a"/>
  <rect x="1052" y="1037" width="55" height="43" fill="#1f2c3a"/>
  <rect x="1232" y="1037" width="55" height="43" fill="#1f2c3a"/>
  <rect x="692" y="1077.5" width="55" height="2.5" fill="url(#uWeb)"/>
  <rect x="812" y="1077.5" width="55" height="2.5" fill="url(#uDl)"/>
  <rect x="872" y="1077.5" width="55" height="2.5" fill="#6fdcef"/>
  <rect x="1052" y="1077.5" width="55" height="2.5" fill="url(#uNote)"/>
  <rect x="1232" y="1077.5" width="55" height="2.5" fill="url(#uCalc)"/>
  <!-- chat -->
  <path fill="#fff" d="M660.5 1047 A11 11 0 1 1 655 1067.6 Q652 1069.5 648.8 1069.5 Q650.5 1066.5 651 1064 A11 11 0 0 1 660.5 1047 Z"/>
  <path d="M656 1056 H665 M656 1061 H661.5" stroke="#1a2533" stroke-width="2" stroke-linecap="round"/>
  <!-- globe -->
  <circle cx="719.5" cy="1058.5" r="11.5" fill="url(#tWeb)"/>
  <g fill="none" stroke="#1f2c3a" stroke-width="1.6" clip-path="url(#tcWeb)"><ellipse cx="719.5" cy="1058.5" rx="5" ry="11.5"/><path d="M706 1054 H733 M706 1063 H733"/></g>
  <!-- code -->
  <g fill="none" stroke="#fff" stroke-width="2.4" stroke-linecap="round" stroke-linejoin="round"><path d="M773.5 1053.5 L768.5 1058.5 L773.5 1063.5 M786.5 1053.5 L791.5 1058.5 L786.5 1063.5 M782.5 1050 L777.5 1067"/></g>
  <!-- cloud -->
  <g fill="url(#tDl)"><circle cx="839.5" cy="1053.5" r="6.8"/><circle cx="832.5" cy="1056.5" r="4.8"/><circle cx="846.5" cy="1056.5" r="4.8"/><rect x="832.5" y="1053.5" width="14" height="7.8"/></g>
  <path d="M839.5 1056 V1069" stroke="#1f2c3a" stroke-width="4.5" stroke-linecap="round"/>
  <path d="M839.5 1056.5 V1069 M834.5 1064 L839.5 1069 L844.5 1064" fill="none" stroke="url(#tDl)" stroke-width="2.2" stroke-linecap="round" stroke-linejoin="round"/>
  <!-- file -->
  <path fill="url(#tFile)" d="M891.5 1047 H901.5 L909 1054.5 V1068 Q909 1070 907 1070 H891.5 Q889.5 1070 889.5 1068 V1049 Q889.5 1047 891.5 1047 Z"/>
  <path fill="#1f2c3a" d="M900.5 1049 V1055.5 H907 Z"/>
  <!-- emerald white -->
  <path fill="none" stroke="#fff" stroke-width="2.2" d="M956.5 1049 A10 10 0 1 1 950.5 1055"/>
  <circle cx="952.5" cy="1051.5" r="2" fill="#fff"/>
  <circle cx="960" cy="1059" r="6.8" fill="#fff"/>
  <ellipse cx="957.6" cy="1059" rx="1.2" ry="1.7" fill="#1a2533"/><ellipse cx="962.4" cy="1059" rx="1.2" ry="1.7" fill="#1a2533"/>
  <!-- music -->
  <circle cx="1017" cy="1065" r="5" fill="#fff"/>
  <path fill="#fff" d="M1019.5 1065 V1050 Q1019.5 1047 1022.5 1047 H1025 A2.6 2.6 0 0 1 1025 1052.2 H1022 V1065 Z"/>
  <!-- notes -->
  <path fill="url(#tNote)" d="M1071.5 1047 H1088.3 Q1091.3 1047 1091.3 1050 V1062.5 L1083.8 1070 H1071.5 Q1068.5 1070 1068.5 1067 V1050 Q1068.5 1047 1071.5 1047 Z"/>
  <path fill="#1a2533" d="M1083 1070 V1065 Q1083 1062 1086 1062 H1091.3 L1083.8 1070 Z" opacity=".9"/>
  <path fill="#a8dcc0" d="M1084.3 1069.5 V1065.5 Q1084.3 1063.3 1086.5 1063.3 H1090.5 Z"/>
  <!-- gear -->
  <g transform="translate(1140 1059)">
   <g fill="#fff">
    <circle r="8.5"/>
    <rect x="-2.6" y="-11.5" width="5.2" height="23" rx="1"/>
    <rect x="-2.6" y="-11.5" width="5.2" height="23" rx="1" transform="rotate(60)"/>
    <rect x="-2.6" y="-11.5" width="5.2" height="23" rx="1" transform="rotate(120)"/>
   </g>
   <circle r="3.6" fill="#1a2533"/>
  </g>
  <!-- carousel -->
  <rect x="1194.5" y="1048" width="11" height="21" rx="2" fill="#fff"/>
  <rect x="1189" y="1050" width="2.3" height="17" fill="#fff"/>
  <rect x="1208.8" y="1050" width="2.3" height="17" fill="#fff"/>
  <!-- calc -->
  <rect x="1249" y="1047" width="22.2" height="23" rx="2.5" fill="url(#tCalc)"/>
  <g stroke="#1f2c3a" stroke-width="1.6" stroke-linecap="round"><path d="M1253 1054.5 H1257.5 M1263 1052 L1267 1056 M1267 1052 L1263 1056 M1253 1063 H1257.5 M1255.25 1060.8 V1065.2 M1263 1061.8 H1267 M1263 1064.4 H1267"/></g>
  <!-- tray -->
  <path fill="#fff" d="M1689 1054.5 H1693 L1698.5 1050 V1066.8 L1693 1062.3 H1689 Z"/>
  <path fill="none" stroke="#fff" stroke-width="1.8" d="M1700.5 1054 Q1702.5 1058.4 1700.5 1062.8 M1702.8 1050.5 Q1707.5 1058.4 1702.8 1066.5"/>
  <g fill="#fff"><circle cx="1737.5" cy="1058.5" r="2.8"/><circle cx="1748" cy="1052.5" r="2.8"/><circle cx="1748" cy="1064.5" r="2.8"/></g>
  <path d="M1737.5 1058.5 L1748 1052.5 M1737.5 1058.5 L1748 1064.5" stroke="#fff" stroke-width="1.8"/>
  <path fill="#fff" d="M1787.6 1050 Q1789 1050 1789 1051.5 Q1792.8 1053 1792.8 1058 V1062.5 L1794.6 1065 H1780.7 L1782.5 1062.5 V1058 Q1782.5 1053 1786.3 1051.5 Q1786.3 1050 1787.6 1050 Z"/>
  <rect x="1785.8" y="1066" width="3.6" height="1.5" rx=".7" fill="#fff"/>
 </svg>
 <div class="abs" style="left:1827px;top:12px;font-size:20.5px;color:#e6e9ec;white-space:nowrap;line-height:20px;letter-spacing:0.4px">8:05 AM</div>
</div>
</body></html>
